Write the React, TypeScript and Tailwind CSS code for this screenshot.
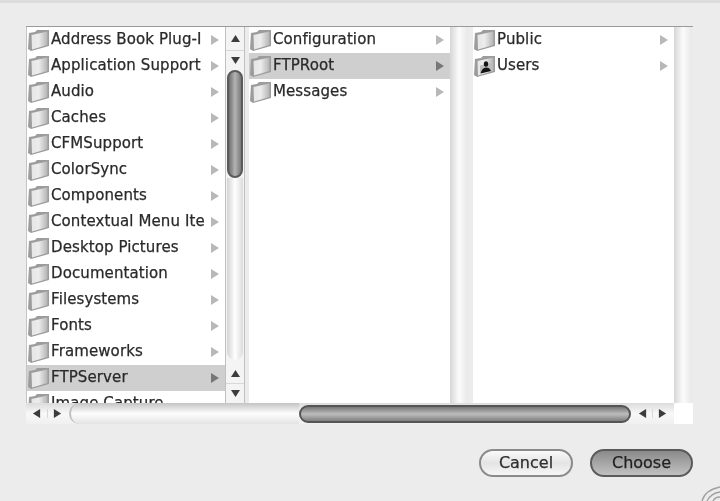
import React from 'react';

const col1 = [
  'Address Book Plug-I',
  'Application Support',
  'Audio',
  'Caches',
  'CFMSupport',
  'ColorSync',
  'Components',
  'Contextual Menu Ite',
  'Desktop Pictures',
  'Documentation',
  'Filesystems',
  'Fonts',
  'Frameworks',
  'FTPServer',
  'Image Capture',
];

const Folder = ({ user }: { user?: boolean }) => (
  <svg width="24" height="24" viewBox="0 0 24 24" className="shrink-0">
    <defs>
      <linearGradient id="folderFace" x1="0" y1="0" x2="1" y2="0">
        <stop offset="0" stopColor="#e6e6e6" />
        <stop offset="0.45" stopColor="#ececec" />
        <stop offset="1" stopColor="#b4b4b4" />
      </linearGradient>
    </defs>
    <path d="M2 5 L8 4 L10 2 L22 2 L22 18 L4 23 L1 21 Z" fill="#9c9c9c" />
    <path d="M4.5 7 L20.5 3.5 L20.5 17 L5 21.5 Z" fill="url(#folderFace)" />
    {user && (
      <g>
        <path d="M7 19.5 L19 16.5 L19 9 L7 11.5 Z" fill="#bdbdbd" />
        <ellipse cx="13" cy="10" rx="2.2" ry="2.8" fill="#141414" />
        <path d="M7.5 19.5 C8.5 15.5 10.5 13.5 13 13.5 C15.5 13.5 17 14.5 18 17 Z" fill="#141414" />
      </g>
    )}
  </svg>
);

const Tri = ({ dir, color, w = 10, h = 10 }: { dir: 'up' | 'down' | 'left' | 'right'; color: string; w?: number; h?: number }) => {
  const pts = { up: '5,1 10,9 0,9', down: '0,1 10,1 5,9', left: '9,0 9,10 1,5', right: '1,0 9,5 1,10' }[dir];
  return (
    <svg width={w} height={h} viewBox="0 0 10 10">
      <polygon points={pts} fill={color} />
    </svg>
  );
};

const Row = ({ label, selected, user, arrow = true }: { label: string; selected?: boolean; user?: boolean; arrow?: boolean }) => (
  <div className={`h-[26px] shrink-0 flex items-center pr-[5px] ${selected ? 'bg-[#cfcfcf]' : ''}`}>
    <Folder user={user} />
    <span className="flex-1 whitespace-nowrap overflow-hidden text-[15px] tracking-[0.1px] text-[#2a2a2a] [-webkit-text-stroke:0.25px_#2a2a2a] -mt-[1px]">{label}</span>
    {arrow && <Tri dir="right" color={selected ? '#777777' : '#b8b8b8'} />}
  </div>
);

const EmptyScroll = () => (
  <div className="w-[18px] shrink-0 bg-linear-to-r from-[#d6d6d6] via-[#fbfbfb] to-[#e8e8e8]" />
);

const ArrowPair = ({ first }: { first: string }) => (
  <div className="flex flex-col shrink-0">
    <div className={`${first} flex items-center justify-center border-b border-[#d8d8d8]`}>
      <Tri dir="up" color="#3c3c3c" w={9} h={9} />
    </div>
    <div className="h-[19px] flex items-center justify-center">
      <Tri dir="down" color="#3c3c3c" w={9} h={9} />
    </div>
  </div>
);

export default function App() {
  return (
    <div className="relative w-[720px] h-[501px] overflow-hidden bg-[#ececec] font-['DejaVu_Sans',sans-serif] blur-[0.6px]">
      <div className="h-[3px] bg-[#dcdcdc]" />
      <div className="pl-[26px] pt-[23px]">
        <div className="w-[667px] flex flex-col">
          <div className="h-[377px] flex bg-[#ececec] border-t border-[#9a9a9a]">
            {/* column 1 */}
            <div className="w-[199px] bg-white overflow-hidden flex flex-col border-l border-[#c4c4c4]">
              {col1.map((n) => (
                <Row key={n} label={n} selected={n === 'FTPServer'} arrow={n !== 'Image Capture'} />
              ))}
            </div>
            <div className="w-[20px] shrink-0 flex flex-col border-x border-[#c0c0c0] bg-[#f4f4f4]">
              <ArrowPair first="h-[24px]" />
              <div className="h-[108px] mx-[1px] shrink-0 rounded-full border-2 border-[#5a5a5a] bg-linear-to-r from-[#6f6f6f] via-[#b4b4b4] to-[#7a7a7a]" />
              <div className="flex-1 mx-[1px] rounded-b-full bg-linear-to-r from-[#d4d4d4] via-[#ffffff] to-[#dcdcdc]" />
              <div className="h-[3px]" />
              <ArrowPair first="h-[21px]" />
            </div>
            <div className="w-[4px] shrink-0" />
            {/* column 2 */}
            <div className="w-[201px] bg-white overflow-hidden flex flex-col">
              <Row label="Configuration" />
              <Row label="FTPRoot" selected />
              <Row label="Messages" />
            </div>
            <EmptyScroll />
            <div className="w-[5px] shrink-0" />
            {/* column 3 */}
            <div className="w-[201px] bg-white overflow-hidden flex flex-col">
              <Row label="Public" />
              <Row label="Users" user />
            </div>
            <EmptyScroll />
          </div>
          {/* horizontal scrollbar */}
          <div className="h-[21px] flex items-center bg-linear-to-b from-[#dcdcdc] via-[#f8f8f8] to-[#f0f0f0]">
            <div className="w-[20px] flex justify-center ml-[1px]">
              <Tri dir="left" color="#3c3c3c" w={9} h={9} />
            </div>
            <div className="w-[20px] flex justify-center border-l border-[#d8d8d8]">
              <Tri dir="right" color="#3c3c3c" w={9} h={9} />
            </div>
            <div className="ml-[2px] w-[230px] h-full rounded-l-full bg-linear-to-b from-[#c4c4c4] via-[#fdfdfd] to-[#e4e4e4] border-l-2 border-[#c0c0c0]" />
            <div className="w-[333px] h-[18px] rounded-full border-2 border-[#555555] bg-linear-to-b from-[#777777] via-[#bdbdbd] to-[#808080]" />
            <div className="w-[20px] ml-[1px] flex justify-center">
              <Tri dir="left" color="#3c3c3c" w={9} h={9} />
            </div>
            <div className="w-[20px] flex justify-center border-l border-[#d8d8d8]">
              <Tri dir="right" color="#3c3c3c" w={9} h={9} />
            </div>
            <div className="ml-[2px] w-[19px] h-full bg-white" />
          </div>
        </div>
        {/* buttons */}
        <div className="w-[667px] mt-[25px] flex justify-end gap-[17px]">
          <button className="w-[94px] h-[28px] rounded-full border-2 border-[#8a8a8a] bg-linear-to-b from-[#fafafa] via-[#e4e4e4] to-[#f6f6f6] text-[16px] text-[#2e2e2e] [-webkit-text-stroke:0.25px_#2e2e2e] flex items-center justify-center">
            Cancel
          </button>
          <button className="w-[103px] h-[28px] rounded-full border-2 border-[#5a5a5a] bg-linear-to-b from-[#8a8a8a] via-[#a6a6a6] to-[#c0c0c0] text-[16px] text-[#222222] [-webkit-text-stroke:0.25px_#222222] flex items-center justify-center">
            Choose
          </button>
        </div>
      </div>
      {/* resize grip */}
      <svg width="22" height="16" viewBox="0 0 22 16" className="absolute right-0 bottom-0">
        <path d="M4 16 C6 9 12 4 22 2 M9 16 C11 12 15 8 22 7 M15 16 C16 14 18 12 22 12" stroke="#a0a0a0" strokeWidth="1.3" fill="none" />
      </svg>
    </div>
  );
}
